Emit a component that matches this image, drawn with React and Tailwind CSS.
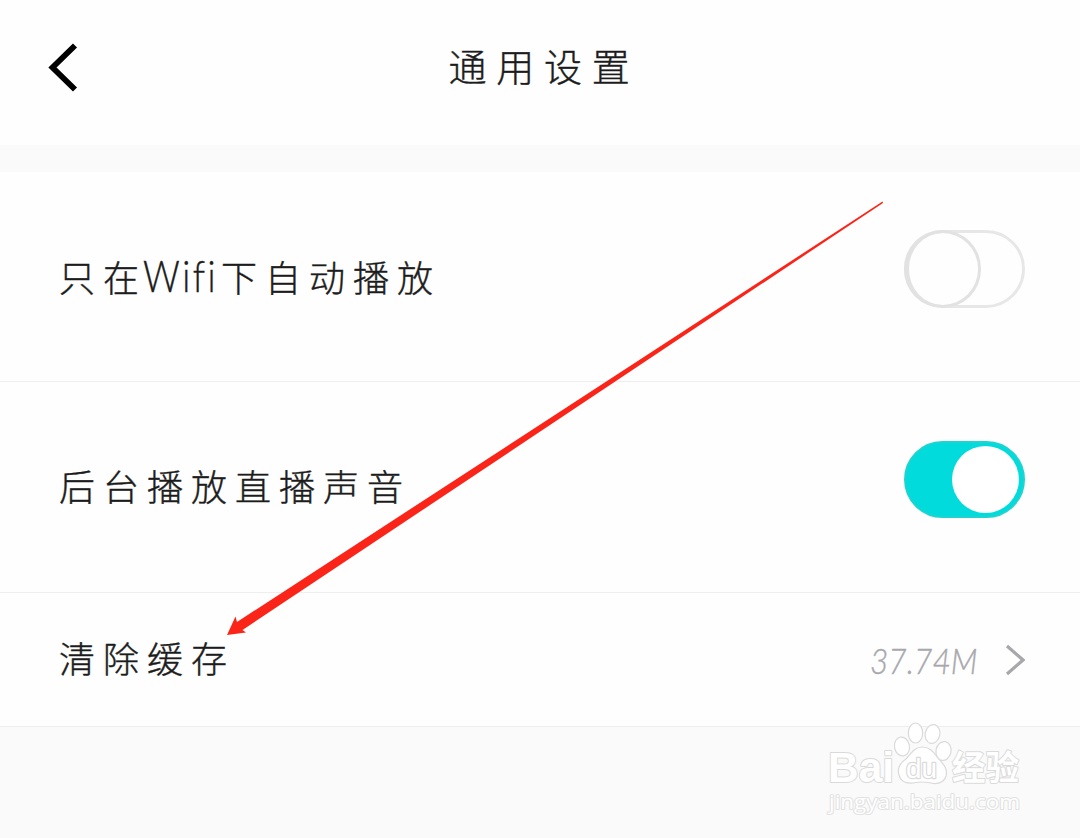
import { clsx } from 'clsx';

const CJK = "font-['Liberation_Sans','Noto_Sans_CJK_SC',sans-serif]";

export default function App() {
    return (
        <div className={clsx('relative h-[838px] w-[1080px] overflow-hidden bg-[#fafafa] font-light text-[#1c1c1c]', CJK)}>
            {/* Header */}
            <header className="grid h-[145px] grid-cols-[1fr_auto_1fr] items-start bg-[#fefefe]">
                <button className="ml-12 mt-[42px] h-[52px] w-8" aria-label="返回">
                    <svg viewBox="0 0 32 52" className="h-[52px] w-8 fill-none stroke-black stroke-[5.8]">
                        <path d="M27 3.5 4.5 25.5 27 47.5" />
                    </svg>
                </button>
                <h1 className="mt-[39px] whitespace-nowrap pl-[8px] text-[38px] leading-[58px] tracking-[9.7px] [-webkit-text-stroke:0.4px_#1c1c1c]">通用设置</h1>
            </header>

            {/* Settings list */}
            <main className="mt-[27px] bg-[#fefefe]">
                <SettingRow
                    className="h-[210px]"
                    label={
                        <>
                            只在
                            <span className="-ml-[4px] mr-[4px] inline-block w-[74px] origin-left scale-x-[0.84] font-['Lato','Noto_Sans',sans-serif] text-[43px] font-light tracking-[3px]">Wifi</span>
                            下自动播放
                        </>
                    }
                >
                    <Toggle />
                </SettingRow>
                <SettingRow className="h-[211px]" label="后台播放直播声音">
                    <Toggle on />
                </SettingRow>
                <SettingRow className="h-[134px]" label="清除缓存">
                    <div className="mt-[39px] flex h-[56px] items-center text-[#a8a8ac]">
                        <span className="w-[107px] origin-left scale-x-[0.88] whitespace-nowrap font-['Lato','Noto_Sans',sans-serif] text-[36px] font-light italic [-webkit-text-stroke:0.4px_#a8a8ac]">37.74M</span>
                        <svg viewBox="0 0 20 32" className="ml-[28px] h-8 w-5 fill-none stroke-[#a8a8ac] stroke-[3.2]">
                            <path d="M2 2 18 16 2 30" />
                        </svg>
                    </div>
                </SettingRow>
            </main>

            <Pointer />
            <Watermark />
        </div>
    );
}

function SettingRow({ label, children, className }) {
    return (
        <div className={clsx('flex justify-between border-b border-[#eeeeee] pl-[59px] pr-[55px]', className)}>
            <div className="flex items-center whitespace-nowrap pt-[3px] text-[36px] leading-[56px] tracking-[8px] [-webkit-text-stroke:0.4px_#1c1c1c]">
                <span>{label}</span>
            </div>
            {children}
        </div>
    );
}

function Toggle({ on }) {
    if (on) {
        return (
            <div className="mt-[59px] flex h-[77px] w-[121px] items-center justify-end rounded-full border-2 border-[#1ed3d0] bg-[#02dbdc] pr-[4px]">
                <div className="size-[67px] rounded-full bg-white" />
            </div>
        );
    }
    return (
        <div className="mt-[58px] h-[78px] w-[121px] rounded-full border-[3px] border-[#e7e7e7]">
            <div className="-ml-[3px] -mt-[3px] h-[78px] w-[77px] rounded-full border-[3px] border-l-[5px] border-[#e2e2e2]" />
        </div>
    );
}

// Red arrow laid over the rows, pointing at the cache entry
function Pointer() {
    return (
        <svg viewBox="0 0 1080 838" className="pointer-events-none absolute inset-0 h-full w-full">
            <path fill="#fb2418" d="M882.5 201.5 883 203 242.5 630 246 632.5 227 635 235.5 616.5 237 622Z" />
        </svg>
    );
}

function Watermark() {
    return (
        <svg viewBox="0 0 230 120" className="pointer-events-none absolute left-[810px] top-[710px] h-[120px] w-[230px]">
            <g fill="#ffffff" stroke="#dadada" strokeWidth="1.2">
                <ellipse cx="92" cy="36.5" rx="7.5" ry="9.5" transform="rotate(-10 92 36.5)" />
                <ellipse cx="105.5" cy="23" rx="7.2" ry="10" />
                <ellipse cx="122.5" cy="24" rx="7.3" ry="9.5" transform="rotate(12 122.5 24)" />
                <ellipse cx="133.5" cy="41" rx="7.5" ry="9.5" transform="rotate(12 133.5 41)" />
                <path d="M112 37C104 37 101 44 96 49C90 53 87 58 89 65C91 73 99 74 106 72.5Q112 71.5 119 72.5C126 75 134 73 136 66C138 58 133 54 128 48C123 42 120 37 112 37Z" />
            </g>
            <g fill="#ffffff" stroke="#dadada" strokeWidth="2" paintOrder="stroke" strokeLinejoin="round">
                <text x="18" y="72" fontFamily="Liberation Sans, sans-serif" fontSize="43" fontWeight="700" textLength="66" lengthAdjust="spacingAndGlyphs">Bai</text>
                <text x="96" y="67.5" fontFamily="Liberation Sans, sans-serif" fontSize="27" fontWeight="400" textLength="31" lengthAdjust="spacingAndGlyphs" strokeWidth="2.4">du</text>
                <text x="142" y="69.5" fontFamily="Liberation Sans, Noto Sans CJK SC, sans-serif" fontSize="34" fontWeight="700" textLength="67" lengthAdjust="spacingAndGlyphs">经验</text>
                <text x="19" y="98.5" fontFamily="Open Sans, sans-serif" fontSize="20" fontWeight="500" textLength="191" lengthAdjust="spacingAndGlyphs" stroke="#e2e2e2" strokeWidth="2">jingyan.baidu.com</text>
            </g>
        </svg>
    );
}
